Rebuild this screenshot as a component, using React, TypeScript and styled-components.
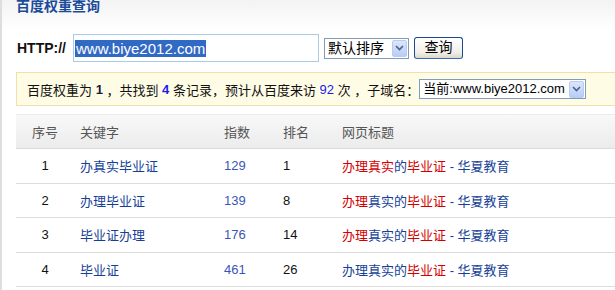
import React from 'react'
import styled, { createGlobalStyle } from 'styled-components'

const GlobalStyle = createGlobalStyle`
  html, body {
    margin: 0;
    padding: 0;
    background: #fff;
  }
  body {
    font-family: "Liberation Sans", "Noto Sans CJK SC", sans-serif;
    font-size: 13px;
    color: #000;
  }
`

interface Row {
  no: number
  keyword: string
  index: number
  rank: number
  // title split into parts, red ones are highlighted
  title: { text: string; hit?: boolean }[]
}

const rows: Row[] = [
  {
    no: 1,
    keyword: '办真实毕业证',
    index: 129,
    rank: 1,
    title: [
      { text: '办理真实', hit: true },
      { text: '的' },
      { text: '毕业证', hit: true },
      { text: ' - 华夏教育' },
    ],
  },
  {
    no: 2,
    keyword: '办理毕业证',
    index: 139,
    rank: 8,
    title: [
      { text: '办理', hit: true },
      { text: '真实的' },
      { text: '毕业证', hit: true },
      { text: ' - 华夏教育' },
    ],
  },
  {
    no: 3,
    keyword: '毕业证办理',
    index: 176,
    rank: 14,
    title: [
      { text: '办理', hit: true },
      { text: '真实的' },
      { text: '毕业证', hit: true },
      { text: ' - 华夏教育' },
    ],
  },
  {
    no: 4,
    keyword: '毕业证',
    index: 461,
    rank: 26,
    title: [
      { text: '办理真实的' },
      { text: '毕业证', hit: true },
      { text: ' - 华夏教育' },
    ],
  },
]

const Arrow = () => (
  <svg width="9" height="6" viewBox="0 0 9 6">
    <path d="M1 1 L4.5 4.5 L8 1" fill="none" stroke="#4d6185" strokeWidth="1.6" />
  </svg>
)

const App: React.FC = () => {
  return (
    <>
      <GlobalStyle />
      <Page>
        <Title>百度权重查询</Title>

        <FormRow>
          <Label>HTTP://</Label>
          <UrlInput>
            <Selected>www.biye2012.com</Selected>
          </UrlInput>
          <FakeSelect width={85}>
            <SelectText>默认排序</SelectText>
            <ArrowBox>
              <Arrow />
            </ArrowBox>
          </FakeSelect>
          <Button>查询</Button>
        </FormRow>

        <Notice>
          <span>百度权重为 </span>
          <Num>1</Num>
          <span> ，共找到 </span>
          <Num blue>4</Num>
          <span> 条记录，预计从百度来访 </span>
          <Num blue light>92</Num>
          <span> 次 ，子域名：</span>
          <FakeSelect width={167} small>
            <SelectText small>当前:www.biye2012.com</SelectText>
            <ArrowBox>
              <Arrow />
            </ArrowBox>
          </FakeSelect>
        </Notice>

        <Table>
          <HeadRow>
            <Cell center>序号</Cell>
            <Cell>关键字</Cell>
            <Cell>指数</Cell>
            <Cell>排名</Cell>
            <Cell>网页标题</Cell>
          </HeadRow>
          {rows.map((r) => (
            <BodyRow key={r.no}>
              <Cell center>{r.no}</Cell>
              <Cell tone="keyword">{r.keyword}</Cell>
              <Cell tone="index">{r.index}</Cell>
              <Cell>{r.rank}</Cell>
              <Cell tone="keyword">
                {r.title.map((t, i) => (
                  <TitlePart key={i} hit={t.hit}>
                    {t.text}
                  </TitlePart>
                ))}
              </Cell>
            </BodyRow>
          ))}
        </Table>
      </Page>
    </>
  )
}

export default App

const Page = styled.div`
  width: 615px;
  height: 290px;
  overflow: hidden;
  border-left: 2px solid #dedede;
  padding-left: 14px;
  box-sizing: border-box;
  background: linear-gradient(#f3f3f3 0px, #ffffff 30px);
`

const Title = styled.div`
  height: 37px;
  margin-top: -3px;
  font-size: 14px;
  line-height: 17px;
  font-weight: bold;
  color: #1b4b9a;
  font-family: "Noto Sans CJK SC", sans-serif;
`

const FormRow = styled.div`
  display: flex;
  align-items: center;
  height: 28px;
`

const Label = styled.span`
  width: 57px;
  padding-left: 1px;
  box-sizing: border-box;
  font-size: 14px;
  font-weight: bold;
  color: #111;
`

const UrlInput = styled.div`
  width: 246px;
  height: 28px;
  box-sizing: border-box;
  border: 1px solid #a9cbe6;
  display: flex;
  align-items: center;
  padding-left: 1px;
`

const Selected = styled.span`
  background: #316ac5;
  color: #fff;
  font-size: 15px;
  line-height: 17px;
  padding: 0 1px;
`

const FakeSelect = styled.div<{ width: number; small?: boolean }>`
  width: ${(p) => p.width}px;
  height: ${(p) => (p.small ? 20 : 21)}px;
  margin-left: ${(p) => (p.small ? 0 : 5)}px;
  box-sizing: border-box;
  border: 1px solid #7f9db9;
  background: #fff;
  display: inline-flex;
  align-items: center;
  justify-content: space-between;
  padding: 0 1px 0 3px;
  vertical-align: middle;
`

const SelectText = styled.span<{ small?: boolean }>`
  font-size: ${(p) => (p.small ? 13 : 14)}px;
  line-height: 16px;
  white-space: nowrap;
  color: #000;
`

const ArrowBox = styled.span`
  width: 15px;
  height: 17px;
  box-sizing: border-box;
  border: 1px solid #b9cbef;
  border-radius: 2px;
  background: linear-gradient(#dce6fd, #b7cdf8);
  display: flex;
  align-items: center;
  justify-content: center;
`

const Button = styled.div`
  width: 49px;
  height: 22px;
  margin-left: 5px;
  box-sizing: border-box;
  border: 1px solid #1c4a8f;
  border-bottom-color: #3b6bc0;
  border-radius: 3px;
  background: linear-gradient(#ffffff, #f1f0ea 70%, #dcd9cc);
  font-size: 14px;
  line-height: 19px;
  text-align: center;
  color: #000;
`

const Notice = styled.div`
  margin-top: 10px;
  height: 34px;
  box-sizing: border-box;
  border: 1px solid #f3dfae;
  border-right: none;
  background: #fffce6;
  display: flex;
  align-items: center;
  padding-left: 10px;
  font-size: 13px;
  white-space: pre;
  color: #111;
`

const Num = styled.b<{ blue?: boolean; light?: boolean }>`
  color: ${(p) => (p.blue ? '#1a1af0' : '#1a1a3a')};
  font-weight: ${(p) => (p.light ? 'normal' : 'bold')};
`

const Table = styled.div`
  margin-top: 8px;
  display: flex;
  flex-direction: column;
`

const columns = '58px 144px 59px 59px 1fr'

const HeadRow = styled.div`
  display: grid;
  grid-template-columns: ${columns};
  height: 35px;
  align-items: center;
  box-sizing: border-box;
  border-top: 1px solid #ececec;
  border-bottom: 1px solid #dcdcdc;
  background: linear-gradient(#f8f8f8, #ececec);
  color: #555;
`

const BodyRow = styled.div`
  display: grid;
  grid-template-columns: ${columns};
  height: 34.5px;
  align-items: center;
  box-sizing: border-box;
  border-bottom: 1px solid #dcdcdc;
  color: #111;
`

const Cell = styled.div<{ center?: boolean; tone?: 'keyword' | 'index' }>`
  text-align: ${(p) => (p.center ? 'center' : 'left')};
  padding-left: ${(p) => (p.center ? 0 : 6)}px;
  font-size: 13px;
  white-space: nowrap;
  color: ${(p) =>
    p.tone === 'keyword' ? '#163f97' : p.tone === 'index' ? '#3a56b4' : 'inherit'};
`

const TitlePart = styled.span<{ hit?: boolean }>`
  color: ${(p) => (p.hit ? '#d40000' : 'inherit')};
`
